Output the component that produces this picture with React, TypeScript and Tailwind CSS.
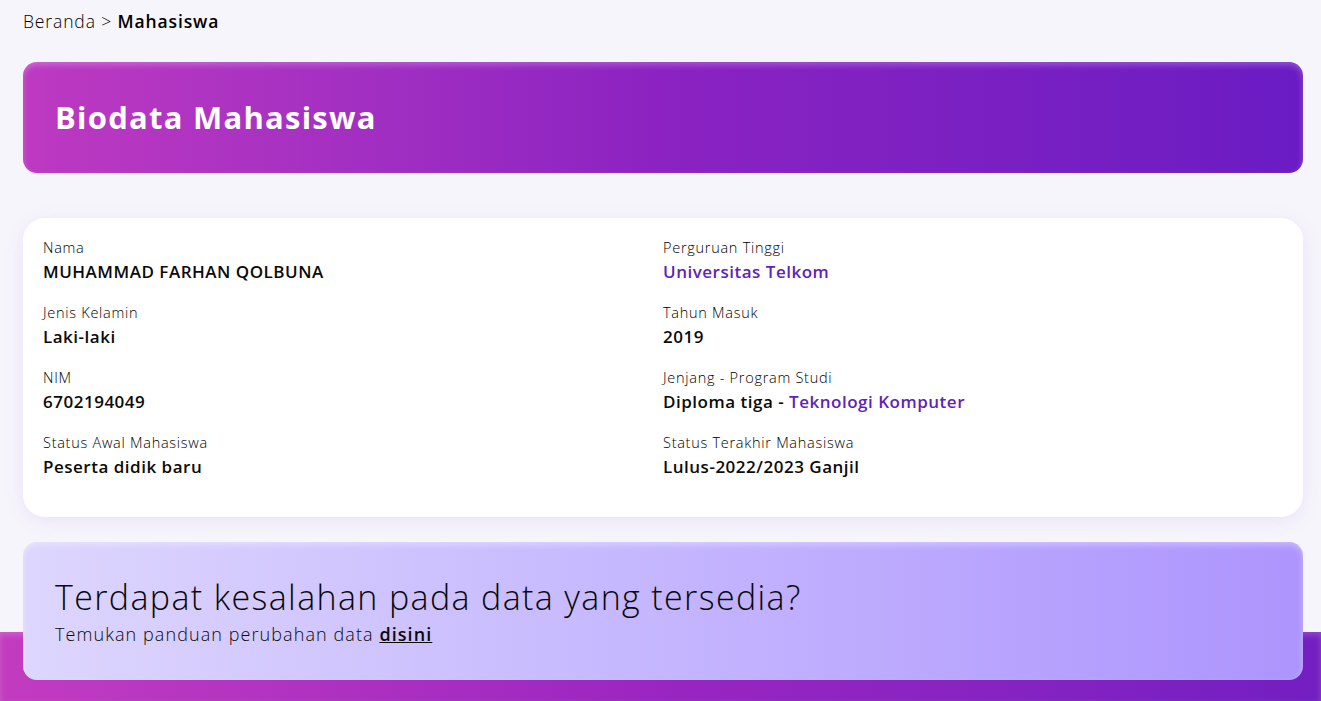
const FIELDS_LEFT = [
  { label: "Nama", value: <>MUHAMMAD FARHAN QOLBUNA</> },
  { label: "Jenis Kelamin", value: <>Laki-laki</> },
  { label: "NIM", value: <>6702194049</> },
  { label: "Status Awal Mahasiswa", value: <>Peserta didik baru</> },
];

const FIELDS_RIGHT = [
  {
    label: "Perguruan Tinggi",
    value: <span className="text-[#5e23b7]">Universitas Telkom</span>,
  },
  { label: "Tahun Masuk", value: <>2019</> },
  {
    label: "Jenjang - Program Studi",
    value: (
      <>
        Diploma tiga - <span className="text-[#5e23b7]">Teknologi Komputer</span>
      </>
    ),
  },
  { label: "Status Terakhir Mahasiswa", value: <>Lulus-2022/2023 Ganjil</> },
];

function Field({ label, value }: { label: string; value: React.ReactNode }) {
  return (
    <div className="flex flex-col h-[65px]">
      <span className="text-[14.5px] leading-[20px] font-light tracking-[0.05em] text-black">
        {label}
      </span>
      <span className="text-[17px] leading-[26px] font-semibold tracking-[0.03em] text-[#0a0a0a] mt-[1px]">
        {value}
      </span>
    </div>
  );
}

export default function App() {
  return (
    <div
      className="min-h-[701px] w-full bg-[#f6f5fb] flex flex-col"
      style={{ fontFamily: "'Open Sans', sans-serif" }}
    >
      <div className="px-[23px] pt-[8px] text-[17.5px] leading-[26px] tracking-[0.05em] text-black">
        <span className="font-light">Beranda &gt; </span>
        <span className="font-semibold">Mahasiswa</span>
      </div>

      <div className="ml-[23px] mr-[18px] mt-[28px] h-[111px] rounded-[14px] bg-gradient-to-r from-[#bd39c1] via-[#8b22c1] to-[#6a1bc3] shadow-[inset_0_3px_6px_rgba(255,255,255,0.25)] flex items-center px-[32px]">
        <h1 className="text-[31px] font-bold tracking-[0.04em] text-white">Biodata Mahasiswa</h1>
      </div>

      <div className="ml-[23px] mr-[18px] mt-[45px] h-[299px] rounded-[22px] bg-white shadow-[0_4px_18px_rgba(170,120,230,0.14)] px-[20px] pt-[20px] grid grid-cols-2">
        <div className="flex flex-col">
          {FIELDS_LEFT.map((f) => (
            <Field key={f.label} label={f.label} value={f.value} />
          ))}
        </div>
        <div className="flex flex-col">
          {FIELDS_RIGHT.map((f) => (
            <Field key={f.label} label={f.label} value={f.value} />
          ))}
        </div>
      </div>

      <div className="relative z-10 ml-[23px] mr-[18px] mt-[25px] -mb-[48px] h-[138px] rounded-[14px] bg-gradient-to-r from-[#ddd6fd] to-[#ad94fd] shadow-[inset_0_3px_6px_rgba(255,255,255,0.35)] px-[32px] pt-[33px]">
        <h2 className="text-[34px] leading-[44px] font-light tracking-[0.04em] text-[#0a0a0a]">
          Terdapat kesalahan pada data yang tersedia?
        </h2>
        <p className="text-[18px] leading-[24px] font-light tracking-[0.06em] text-[#0a0a0a] mt-[3px]">
          Temukan panduan perubahan data{" "}
          <a href="#" className="font-semibold underline">
            disini
          </a>
        </p>
      </div>
      <div className="h-[69px] w-full bg-gradient-to-r from-[#c23bc0] via-[#9a25c0] to-[#731ec1] shadow-[inset_0_3px_6px_rgba(255,255,255,0.2)]" />
    </div>
  );
}
